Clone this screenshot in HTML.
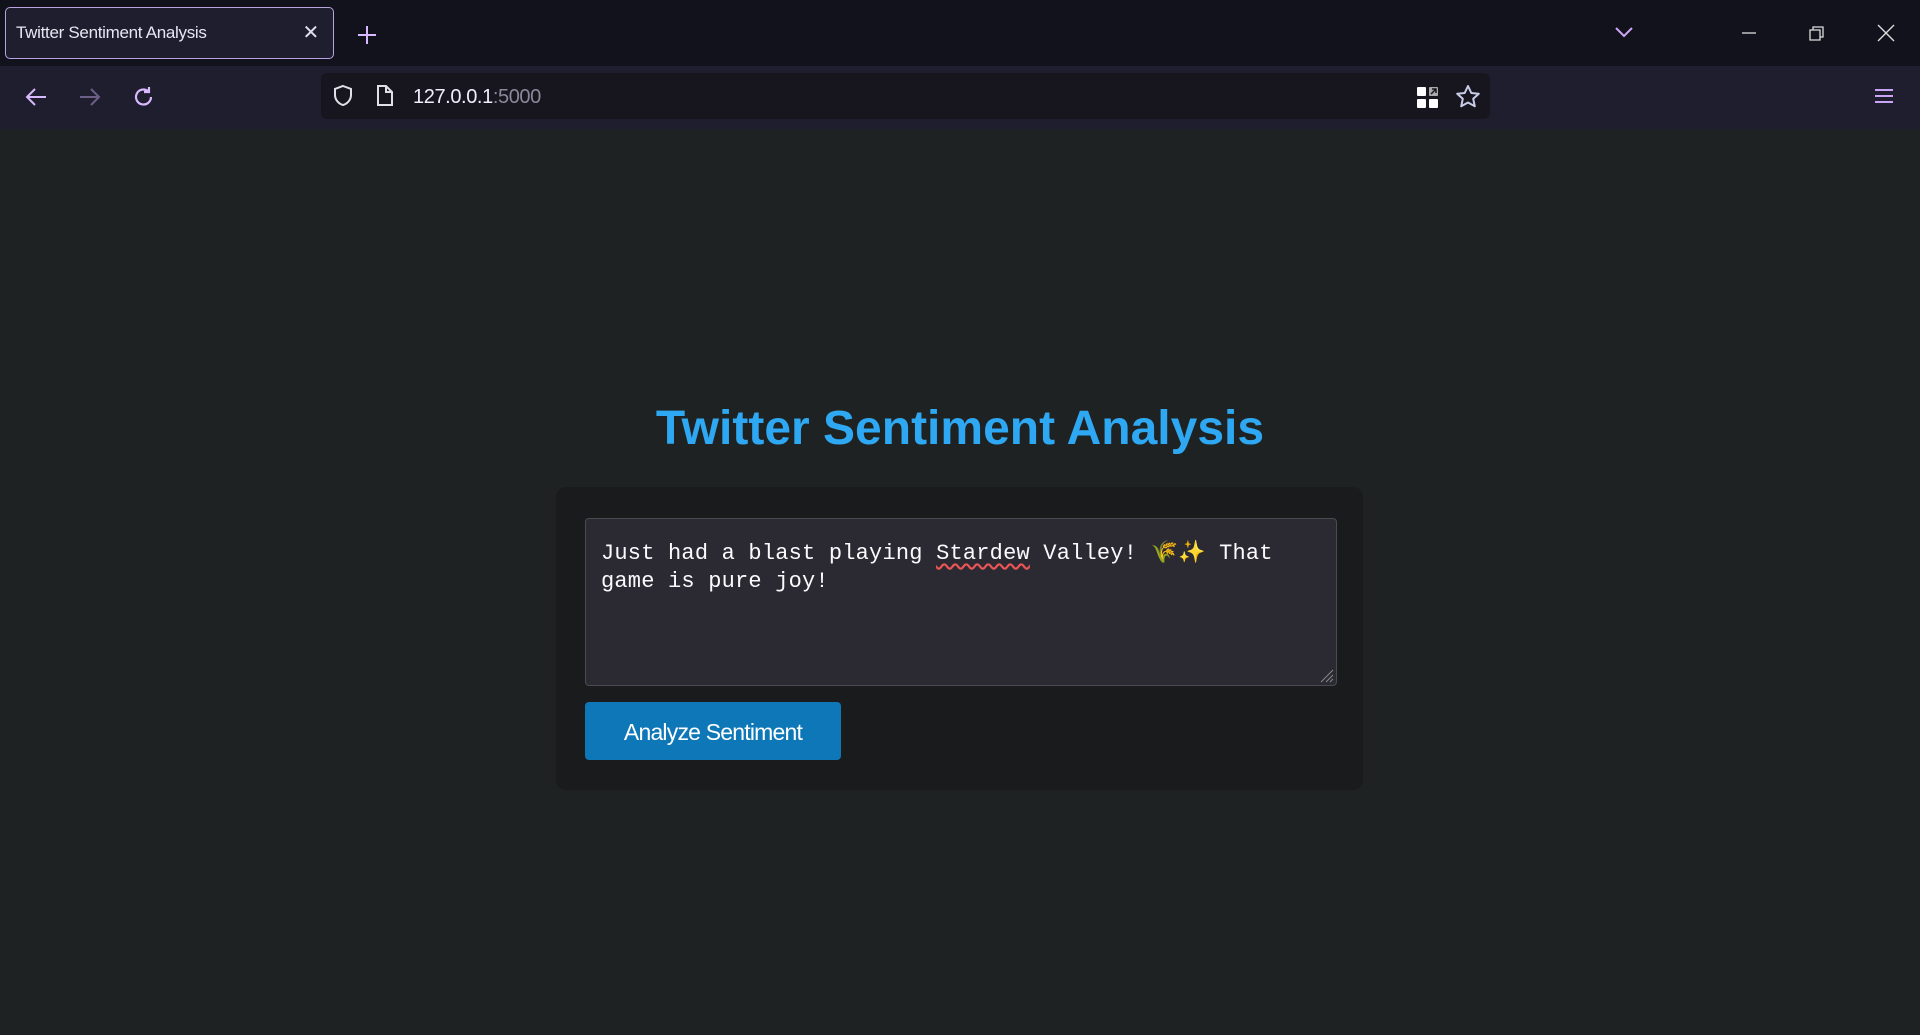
<!DOCTYPE html>
<html><head><meta charset="utf-8"><style>
*{margin:0;padding:0;box-sizing:border-box}
body{width:1920px;height:1035px;background:#1f2223;overflow:hidden;font-family:"Liberation Sans",sans-serif;position:relative}
.tabbar{position:absolute;left:0;top:0;width:1920px;height:66px;background:#12121c}
.tab{position:absolute;left:5px;top:7px;width:329px;height:52px;border:1px solid #b9a2e0;border-radius:5px;background:#1f1e2e;color:#e8e6f3;font-size:17px;line-height:50px;padding-left:10px;letter-spacing:-0.3px}
.tab .x{position:absolute;right:14px;top:0;color:#e0def0;font-size:20px}
.nav{position:absolute;left:0;top:66px;width:1920px;height:63px;background:#1f1e2e}
.url{position:absolute;left:321px;top:7px;width:1169px;height:46px;background:#17161f;border-radius:6px}
.url .t{position:absolute;left:92px;top:1px;line-height:46px;font-size:20px;color:#f0eef8;letter-spacing:-0.4px}
.url .t span{color:#8a889a}
svg{position:absolute}
h1{position:absolute;left:0;width:1920px;top:401px;text-align:center;color:#2ea8f2;font-size:48px;font-weight:bold}
.card{position:absolute;left:556px;top:487px;width:807px;height:303px;background:#1a1b1d;border-radius:10px}
.ta{position:absolute;left:29px;top:31px;width:752px;height:168px;background:#2b2a33;border:1px solid #4a4a50;border-radius:4px;padding:21px 15px;color:#fbfbfe;font-family:"Liberation Mono",monospace;font-size:22px;line-height:28px;letter-spacing:0.2px}
.sq{text-decoration:underline wavy #e55;text-underline-offset:4px}
.btn{position:absolute;left:29px;top:215px;width:256px;height:58px;background:#0e77b8;border-radius:4px;color:#fff;font-size:23px;line-height:60px;text-align:center;letter-spacing:-0.8px}
</style></head><body>
<div class="tabbar">
 <div class="tab">Twitter Sentiment Analysis<span class="x">✕</span></div>
 <svg style="left:356px;top:24px" width="22" height="22"><path d="M11 2v18M2 11h18" stroke="#d8b8ff" stroke-width="2"/></svg>
 <svg style="left:1614px;top:25px" width="20" height="14"><path d="M2 3l8 8 8-8" stroke="#c9a6f5" stroke-width="2" fill="none"/></svg>
 <svg style="left:1740px;top:25px" width="18" height="18"><path d="M2 8h14" stroke="#ddd" stroke-width="1.3"/></svg>
 <svg style="left:1808px;top:24px" width="18" height="18"><path d="M2 6h10v10H2zM5 6V3h10v10h-3" stroke="#ddd" stroke-width="1.3" fill="none"/></svg>
 <svg style="left:1876px;top:23px" width="20" height="20"><path d="M2 2l16 16M18 2L2 18" stroke="#ddd" stroke-width="1.4"/></svg>
</div>
<div class="nav">
 <svg style="left:24px;top:20px" width="24" height="22"><path d="M22 11H3M11 3l-8 8 8 8" stroke="#d8b8ff" stroke-width="2" fill="none"/></svg>
 <svg style="left:78px;top:20px" width="24" height="22"><path d="M2 11h19M13 3l8 8-8 8" stroke="#6c5f86" stroke-width="2" fill="none"/></svg>
 <svg style="left:132px;top:19px" width="24" height="24"><path d="M19 12a7.5 7.5 0 1 1-3-6M17 2v5h-5" stroke="#d8b8ff" stroke-width="2.2" fill="none"/></svg>
 <div class="url">
  <svg style="left:10px;top:11px" width="24" height="24"><path d="M12 2l8 3v6c0 5-4 9-8 10-4-1-8-5-8-10V5z" stroke="#e0e0e8" stroke-width="2" fill="none"/></svg>
 <svg style="left:54px;top:11px" width="20" height="24"><path d="M3 2h8l6 6v13H3zM11 2v6h6" stroke="#e0e0e8" stroke-width="2" fill="none"/></svg>
  <div class="t">127.0.0.1<span>:5000</span></div>
  <svg style="left:1095px;top:13px" width="24" height="24"><rect x="1" y="1" width="9" height="9" rx="1" fill="#fff"/><rect x="1" y="13" width="9" height="9" rx="1" fill="#fff"/><rect x="13" y="13" width="9" height="9" rx="1" fill="#fff"/><rect x="13" y="1" width="9" height="9" rx="1" fill="#aaa"/><path d="M15 8l5-5M16 3h4v4" stroke="#17161f" stroke-width="1.5" fill="none"/></svg>
  <svg style="left:1134px;top:11px" width="26" height="26"><path d="M13 2l3.3 7 7.5.8-5.6 5 1.6 7.5L13 18.5l-6.8 3.8 1.6-7.5-5.6-5 7.5-.8z" stroke="#c8cce8" stroke-width="2" fill="none" stroke-linejoin="round"/></svg>
 </div>
 <svg style="left:1874px;top:20px" width="20" height="20"><path d="M1 4h18M1 10h18M1 16h18" stroke="#c9a6f5" stroke-width="2"/></svg>
</div>
<h1>Twitter Sentiment Analysis</h1>
<div class="card">
 <div class="ta">Just had a blast playing <span class="sq">Stardew</span> Valley! 🌾✨ That<br>game is pure joy!
  <svg style="right:2px;bottom:2px" width="16" height="16"><path d="M15 3L3 15M15 8L8 15M15 12l-3 3" stroke="#888" stroke-width="1"/></svg>
 </div>
 <div class="btn">Analyze Sentiment</div>
</div>
</body></html>
